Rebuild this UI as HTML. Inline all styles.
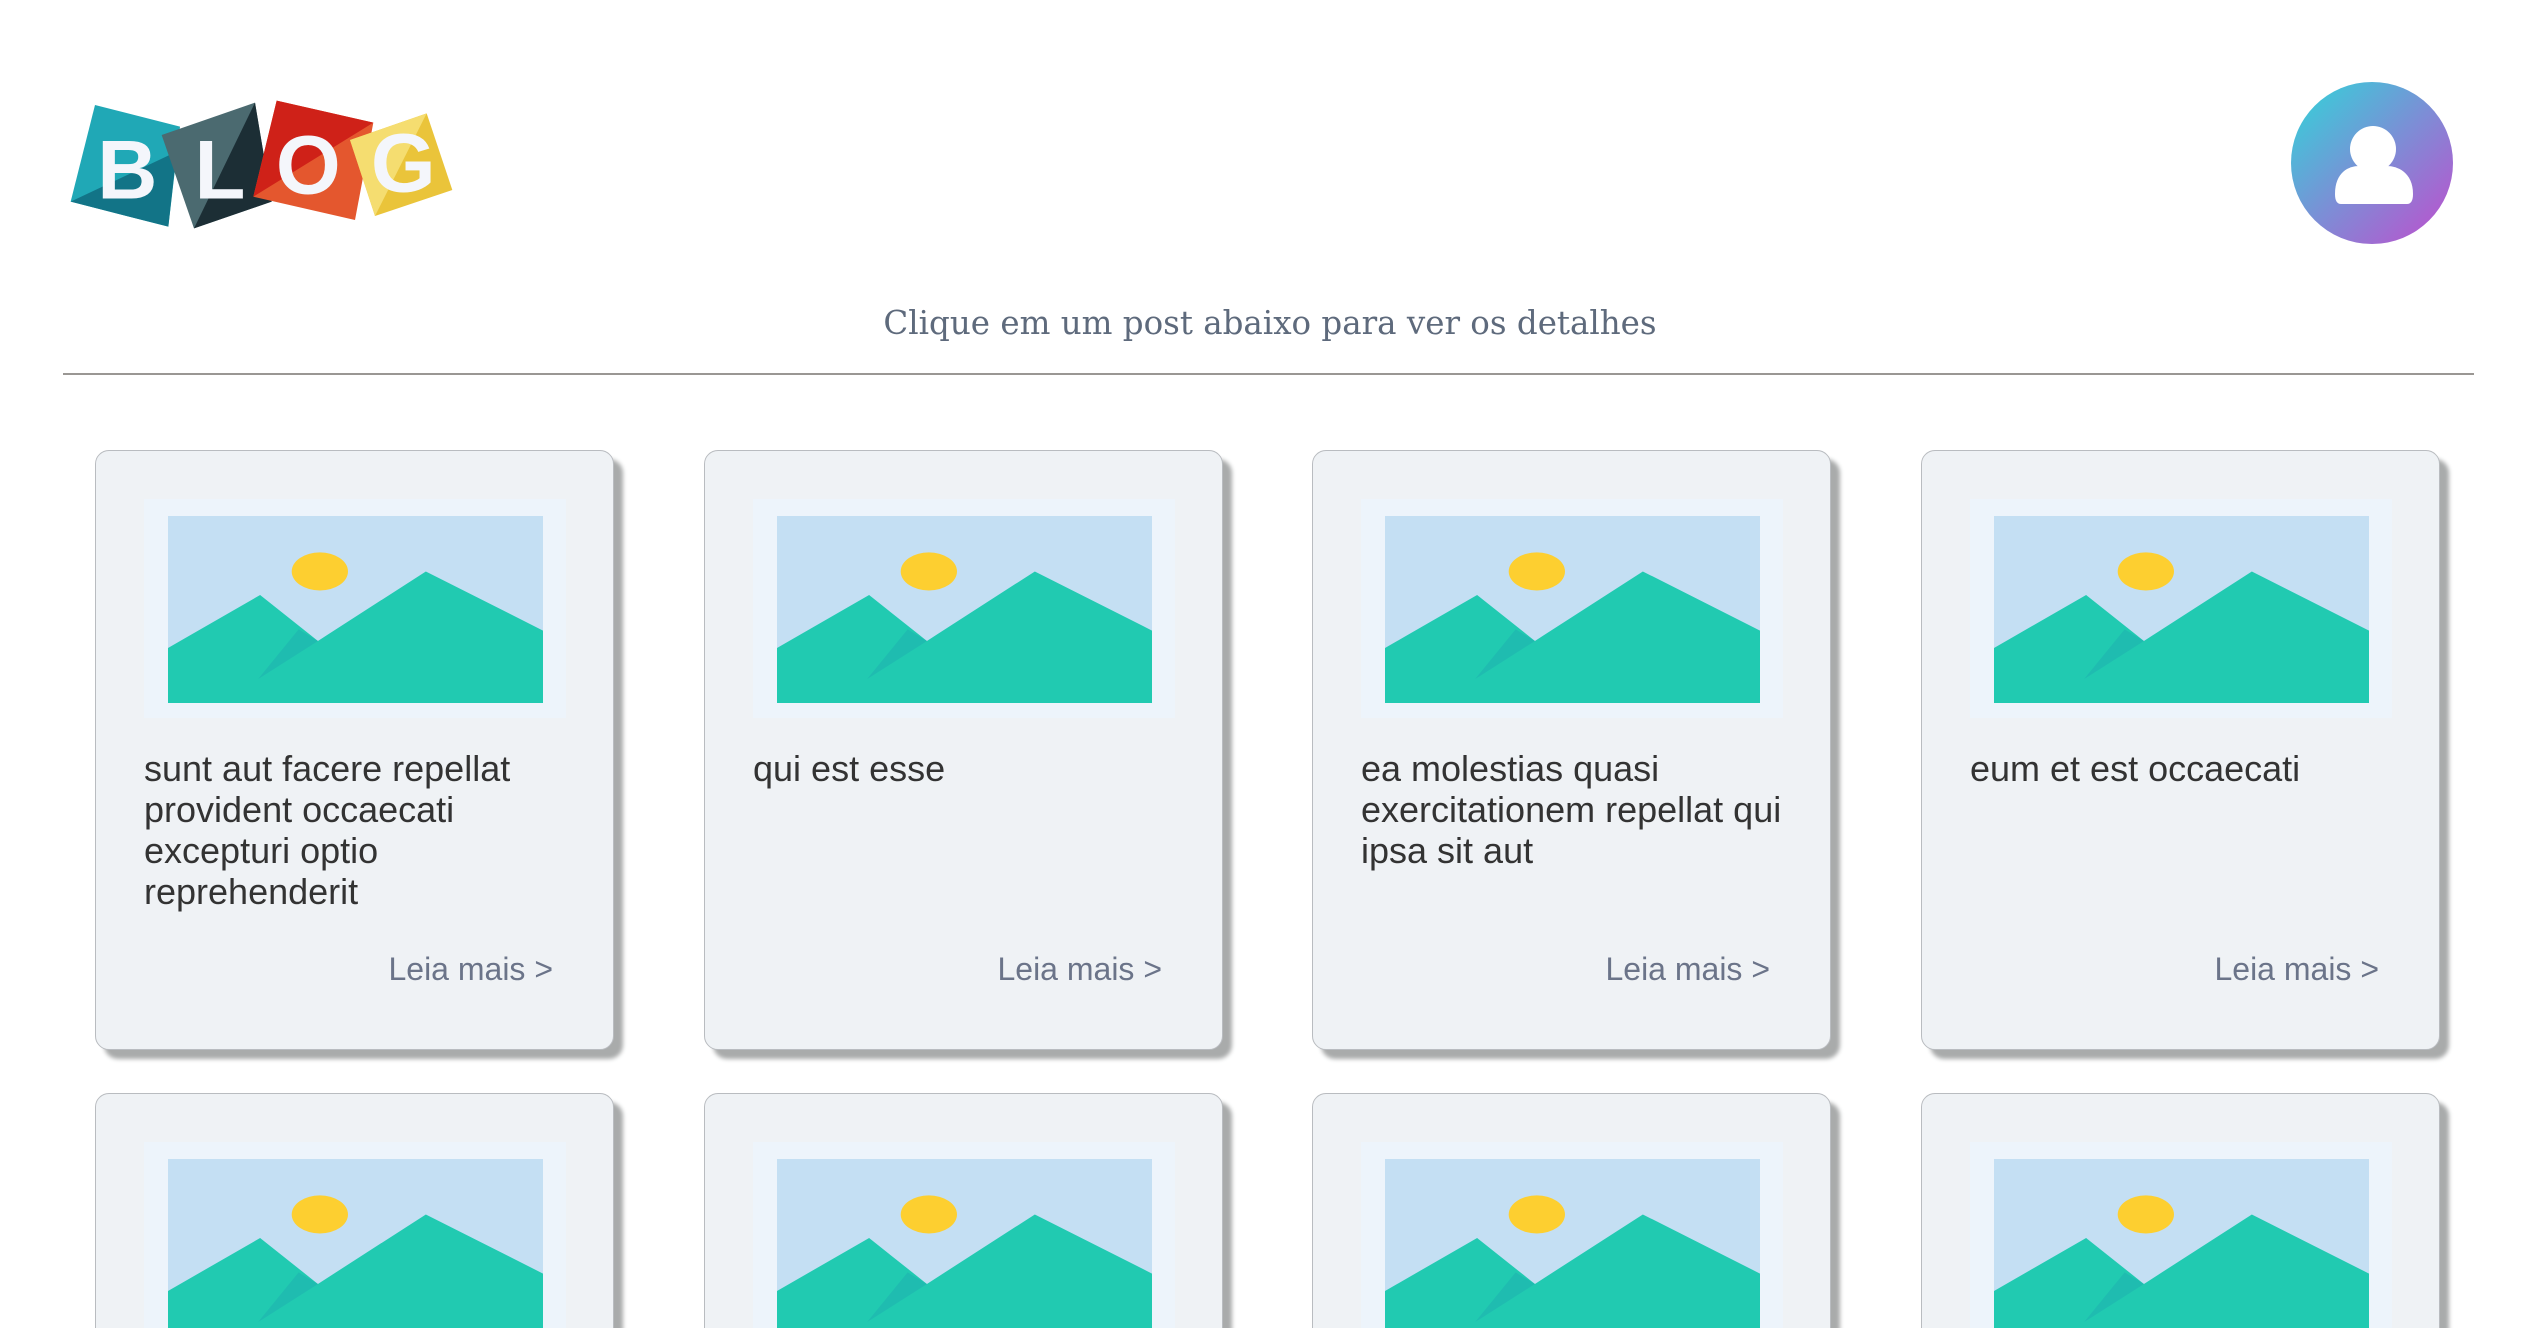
<!DOCTYPE html>
<html><head><meta charset="utf-8"><style>
html,body{margin:0;padding:0;background:#fff;width:2540px;height:1328px;overflow:hidden;position:relative;font-family:"Liberation Sans",Arial,sans-serif}
.logo{position:absolute;left:40px;top:80px;width:440px;height:180px}
.avatar{position:absolute;left:2291px;top:82px;width:162px;height:162px;border-radius:50%;background:linear-gradient(135deg,#2fd6d9 0%,#7b8fd6 50%,#c14ccd 100%);overflow:hidden}
.sub{position:absolute;left:0;width:2540px;top:304px;text-align:center;font-family:"DejaVu Serif","Liberation Serif",serif;font-size:32.5px;color:#5e6a7c}
.line{position:absolute;left:63px;width:2411px;top:373px;height:2px;background:#9a9794}
.card{position:absolute;width:519px;height:600px;background:#eff2f5;border:1px solid #b9bcc0;border-radius:14px;box-shadow:9px 9px 4px #a9abab;box-sizing:border-box}
.frame{position:absolute;left:48px;top:48px;width:422px;height:219px;background:#edf4fb}
.frame svg{position:absolute;left:24px;top:17px;width:375px;height:187px}
.title{position:absolute;left:48px;top:297px;width:440px;font-size:36px;line-height:41px;color:#333}
.more{position:absolute;right:60px;top:500px;font-size:32px;color:#6b7489}
</style></head><body>
<svg class="logo" viewBox="0 0 1320 540">
<polygon points="165,75 420,140 385,440 92,365" fill="#20a8b6"/>
<polygon points="92,365 410,215 385,440" fill="#127487"/>
<polygon points="365,165 645,68 695,365 462,445" fill="#4b6a70"/>
<polygon points="645,68 695,365 462,445" fill="#1c2e35"/>
<polygon points="710,62 1000,128 945,420 640,350" fill="#e4572e"/>
<polygon points="710,62 1000,128 640,350" fill="#cf2118"/>
<polygon points="930,180 1160,100 1237,330 1005,408" fill="#eac43a"/>
<polygon points="930,180 1160,100 1005,408" fill="#f5dd70"/>
<g fill="#f4f6fb" font-family="Liberation Sans,Arial,sans-serif" font-weight="bold" font-size="250" text-anchor="middle">
<text x="262" y="355">B</text><text x="540" y="355">L</text><text x="805" y="340">O</text><text x="1090" y="335">G</text></g>
</svg>
<div class="avatar"><svg width="162" height="162" viewBox="0 0 162 162">
<circle cx="82" cy="67" r="23" fill="#fff"/>
<path d="M44 112 C44 90 58 84 68 84 L96 84 C106 84 122 90 122 112 Q122 122 116 122 L50 122 Q44 122 44 112Z" fill="#fff"/></svg></div>
<div class="sub">Clique em um post abaixo para ver os detalhes</div>
<div class="line"></div>

<svg width="0" height="0" style="position:absolute"><defs><symbol id="pic" viewBox="0 0 973 452" preserveAspectRatio="none">
<rect width="973" height="452" fill="#c4dff3"/>
<ellipse cx="394" cy="134" rx="73" ry="46" fill="#fdcf30"/>
<polygon points="0,319 239,191 389,302 669,134 973,277 973,452 0,452" fill="#21cab1"/>
<polygon points="339,274 389,302 234,394" fill="#1fbcb0"/>
</symbol></defs></svg>

<div class="card" style="left:95px;top:450px"><div class="frame"><svg><use href="#pic"/></svg></div><div class="title">sunt aut facere repellat provident occaecati excepturi optio reprehenderit</div><div class="more">Leia mais &gt;</div></div>
<div class="card" style="left:704px;top:450px"><div class="frame"><svg><use href="#pic"/></svg></div><div class="title">qui est esse</div><div class="more">Leia mais &gt;</div></div>
<div class="card" style="left:1312px;top:450px"><div class="frame"><svg><use href="#pic"/></svg></div><div class="title">ea molestias quasi exercitationem repellat qui ipsa sit aut</div><div class="more">Leia mais &gt;</div></div>
<div class="card" style="left:1921px;top:450px"><div class="frame"><svg><use href="#pic"/></svg></div><div class="title">eum et est occaecati</div><div class="more">Leia mais &gt;</div></div>

<div class="card" style="left:95px;top:1093px"><div class="frame"><svg><use href="#pic"/></svg></div></div>
<div class="card" style="left:704px;top:1093px"><div class="frame"><svg><use href="#pic"/></svg></div></div>
<div class="card" style="left:1312px;top:1093px"><div class="frame"><svg><use href="#pic"/></svg></div></div>
<div class="card" style="left:1921px;top:1093px"><div class="frame"><svg><use href="#pic"/></svg></div></div>
</body></html>
